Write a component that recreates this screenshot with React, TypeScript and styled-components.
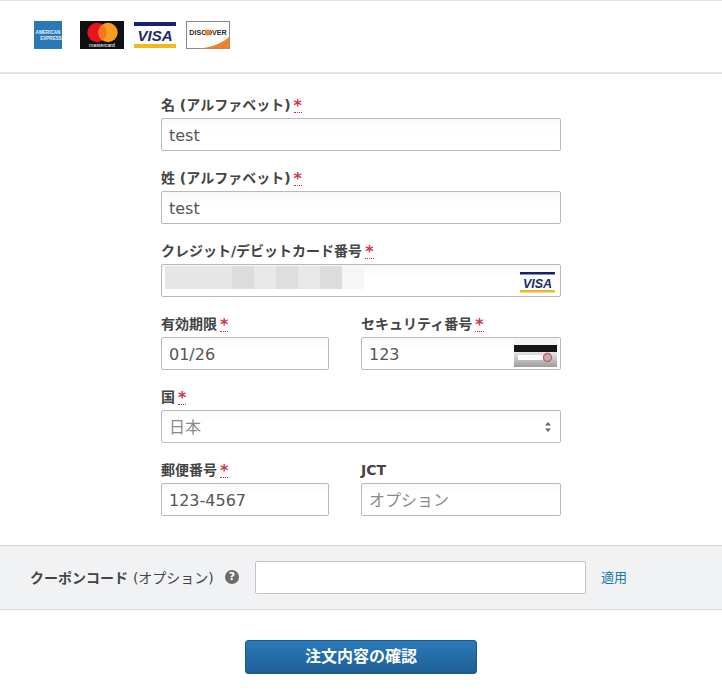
import React from "react";
import styled, { createGlobalStyle } from "styled-components";

const Global = createGlobalStyle`
  html, body { margin: 0; padding: 0; background: #fff; }
  body { font-family: "DejaVu Sans", "Noto Sans CJK JP", sans-serif; color: #444; }
  * { box-sizing: border-box; }
`;

const Page = styled.div`
  width: 722px;
  height: 693px;
  overflow: hidden;
  display: flex;
  flex-direction: column;
`;

const CardBar = styled.div`
  height: 74px;
  border-top: 1px solid #e2e2e2;
  border-bottom: 2px solid #e2e2e2;
  padding: 20px 0 0 34px;
  display: flex;
  align-items: flex-start;
`;

const Logo = styled.svg<{ $gap?: number }>`
  display: block;
  flex: none;
  margin-right: ${(p) => p.$gap ?? 0}px;
`;

const Form = styled.div`
  width: 400px;
  margin: 22px 0 0 161px;
  display: flex;
  flex-direction: column;
  gap: 18px;
`;

const Row = styled.div`
  display: flex;
  gap: 32px;
`;

const Field = styled.div<{ $w?: number }>`
  width: ${(p) => (p.$w ? `${p.$w}px` : "100%")};
  display: flex;
  flex-direction: column;
  flex: none;
`;

const Label = styled.div`
  height: 22px;
  font-size: 14px;
  line-height: 18px;
  font-weight: 700;
  color: #444;
  white-space: nowrap;
  display: flex;
  align-items: flex-start;
`;

const Req = styled.span`
  position: relative;
  color: #d2334a;
  font-weight: 700;
  font-size: 16px;
  margin-left: 3px;
  line-height: 20px;
  height: 20px;
  display: block;

  &::after {
    content: "";
    position: absolute;
    left: 0;
    right: 0;
    top: 16px;
    border-bottom: 1px dotted #d2233a;
  }
`;

const InputBox = styled.div`
  position: relative;
  height: 33px;
  border: 1px solid #b9b9b9;
  border-radius: 2px;
  background: linear-gradient(#f9f9f9, #fff 40%);
  overflow: hidden;
  display: flex;
  align-items: center;
  padding: 2px 7px 0;
  font-size: 16px;
  color: #555;
`;

const Placeholder = styled.span`
  color: #8a8a8a;
  margin-bottom: 4px;
`;

const Blur = styled.div`
  width: 199px;
  height: 23px;
  margin-left: -4px;
  margin-bottom: 9px;
  display: flex;
`;

const BlurCell = styled.div<{ $w: number; $c: string }>`
  width: ${(p) => p.$w}px;
  background: ${(p) => p.$c};
`;

const InnerIcon = styled.svg<{ $right: number }>`
  position: absolute;
  top: 0;
  right: ${(p) => p.$right}px;
`;

const Stepper = styled.svg`
  position: absolute;
  right: 8px;
  top: 10px;
`;

const Coupon = styled.div`
  margin-top: 29px;
  height: 65px;
  background: #f0f2f4;
  border-top: 1px solid #d4d4d4;
  border-bottom: 1px solid #d4d4d4;
  display: flex;
  align-items: center;
  padding-left: 30px;
`;

const CouponLabel = styled.div`
  width: 195px;
  font-size: 14px;
  font-weight: 700;
  color: #444;
  white-space: nowrap;
  padding-bottom: 2px;
`;

const Optional = styled.span`
  font-weight: 400;
`;

const HelpBadge = styled.span`
  width: 14px;
  height: 14px;
  border-radius: 50%;
  background: #6b6b6b;
  color: #fff;
  font-size: 11px;
  font-weight: 700;
  line-height: 14px;
  text-align: center;
  flex: none;
  margin-right: 16px;
  margin-bottom: 2px;
`;

const CouponInput = styled.div`
  width: 331px;
  height: 33px;
  background: #fff;
  border: 1px solid #c4c4c4;
  border-radius: 2px;
  flex: none;
  margin-right: 15px;
`;

const ApplyLink = styled.span`
  font-size: 13px;
  color: #1f78a8;
  padding-bottom: 2px;
`;

const Footer = styled.div`
  display: flex;
  justify-content: center;
  padding-top: 30px;
`;

const Submit = styled.div`
  width: 232px;
  height: 34px;
  border-radius: 3px;
  border: 1px solid #1d5788;
  background: linear-gradient(#2a7ab9, #1e5f97);
  color: #fff;
  font-size: 16px;
  font-weight: 700;
  display: flex;
  align-items: center;
  justify-content: center;
  padding-bottom: 5px;
`;

const LOGO_FONT = "Liberation Sans";

const Amex = () => (
  <Logo width="28" height="28" viewBox="0 0 28 28" $gap={18}>
    <rect width="28" height="28" fill="#2a78b5" />
    <text x="14" y="12.5" fontSize="4.6" fontWeight="700" fill="#e8f2fa" textAnchor="middle" fontFamily={LOGO_FONT}>AMERICAN</text>
    <text x="17" y="18.5" fontSize="4.6" fontWeight="700" fill="#e8f2fa" textAnchor="middle" fontFamily={LOGO_FONT}>EXPRESS</text>
  </Logo>
);

const Mastercard = () => (
  <Logo width="44" height="28" viewBox="0 0 44 28" $gap={10}>
    <rect width="44" height="28" fill="#111" />
    <circle cx="17" cy="11.5" r="9.7" fill="#e5141f" />
    <circle cx="28" cy="11.5" r="9.7" fill="#f79e1b" />
    <path d="M22.5 3.5a9.7 9.7 0 0 1 0 16a9.7 9.7 0 0 1 0-16z" fill="#f4791f" />
    <text x="22" y="26" fontSize="5.2" fill="#fff" textAnchor="middle" fontFamily={LOGO_FONT}>mastercard</text>
  </Logo>
);

const Visa = () => (
  <Logo width="42" height="28" viewBox="0 0 42 28" $gap={10}>
    <rect width="42" height="28" fill="#fff" />
    <rect y="1" width="42" height="4" fill="#1a1f71" />
    <rect y="23" width="42" height="4" fill="#f2b71e" />
    <text x="21" y="19.5" fontSize="15" fontWeight="700" fontStyle="italic" fill="#1a2a6c" textAnchor="middle" fontFamily={LOGO_FONT}>VISA</text>
  </Logo>
);

const Discover = () => (
  <Logo width="44" height="28" viewBox="0 0 44 28">
    <rect x="0.5" y="0.5" width="43" height="27" fill="#fff" stroke="#8a8a8a" />
    <path d="M14 27.5C28 26 38 21 43.5 15.5V27.5z" fill="#f0822a" />
    <text x="22" y="14" fontSize="7.2" fontWeight="700" fill="#2a2a2a" textAnchor="middle" fontFamily={LOGO_FONT}>DISCOVER</text>
    <circle cx="21.6" cy="11.4" r="3" fill="#f0822a" />
  </Logo>
);

const Star = () => <Req>*</Req>;

const cells: [number, string][] = [
  [67, "#e6e6e6"], [22, "#dcdcdc"], [22, "#e8e8e8"], [22, "#dedede"], [22, "#e8e8e8"], [22, "#dcdcdc"], [22, "#f6f6f6"],
];

export default function App() {
  return (
    <Page>
      <Global />
      <CardBar>
        <Amex />
        <Mastercard />
        <Visa />
        <Discover />
      </CardBar>
      <Form>
        <Field>
          <Label>名 (アルファベット)<Star /></Label>
          <InputBox>test</InputBox>
        </Field>
        <Field>
          <Label>姓 (アルファベット)<Star /></Label>
          <InputBox>test</InputBox>
        </Field>
        <Field>
          <Label>クレジット/デビットカード番号<Star /></Label>
          <InputBox>
            <Blur>
              {cells.map(([w, c], i) => (
                <BlurCell key={i} $w={w} $c={c} />
              ))}
            </Blur>
            <InnerIcon $right={5} width="35" height="31" viewBox="0 0 35 31">
              <rect x="0" y="7" width="35" height="2.5" fill="#1a1f71" />
              <rect x="0" y="25" width="35" height="2.5" fill="#f2b71e" />
              <text x="17.5" y="22.5" fontSize="12.5" fontWeight="700" fontStyle="italic" fill="#1a2a6c" textAnchor="middle" fontFamily={LOGO_FONT}>VISA</text>
            </InnerIcon>
          </InputBox>
        </Field>
        <Row>
          <Field $w={168}>
            <Label>有効期限<Star /></Label>
            <InputBox>01/26</InputBox>
          </Field>
          <Field $w={200}>
            <Label>セキュリティ番号<Star /></Label>
            <InputBox>
              123
              <InnerIcon $right={3} width="43" height="31" viewBox="0 0 43 31">
                <defs>
                  <linearGradient id="cvv" x1="0" y1="0" x2="0" y2="1">
                    <stop offset="0" stopColor="#e6e6e6" />
                    <stop offset="1" stopColor="#9c9c9c" />
                  </linearGradient>
                </defs>
                <rect width="43" height="7" fill="#f4f4f4" />
                <rect y="14" width="43" height="15" fill="url(#cvv)" />
                <rect y="7" width="43" height="7" fill="#151515" />
                <rect x="4" y="17" width="25" height="5" fill="#fff" />
                <circle cx="33.5" cy="19.5" r="4" fill="#b5b5b5" stroke="#e0506a" strokeWidth="1.4" />
              </InnerIcon>
            </InputBox>
          </Field>
        </Row>
        <Field>
          <Label>国<Star /></Label>
          <InputBox>
            <Placeholder>日本</Placeholder>
            <Stepper width="8" height="12" viewBox="0 0 8 12">
              <path d="M4 1L7 4.5H1z" fill="#666" />
              <path d="M4 11L7 7.5H1z" fill="#666" />
            </Stepper>
          </InputBox>
        </Field>
        <Row>
          <Field $w={168}>
            <Label>郵便番号<Star /></Label>
            <InputBox>123-4567</InputBox>
          </Field>
          <Field $w={200}>
            <Label>JCT</Label>
            <InputBox><Placeholder>オプション</Placeholder></InputBox>
          </Field>
        </Row>
      </Form>
      <Coupon>
        <CouponLabel>クーポンコード <Optional>(オプション)</Optional></CouponLabel>
        <HelpBadge>?</HelpBadge>
        <CouponInput />
        <ApplyLink>適用</ApplyLink>
      </Coupon>
      <Footer>
        <Submit>注文内容の確認</Submit>
      </Footer>
    </Page>
  );
}
